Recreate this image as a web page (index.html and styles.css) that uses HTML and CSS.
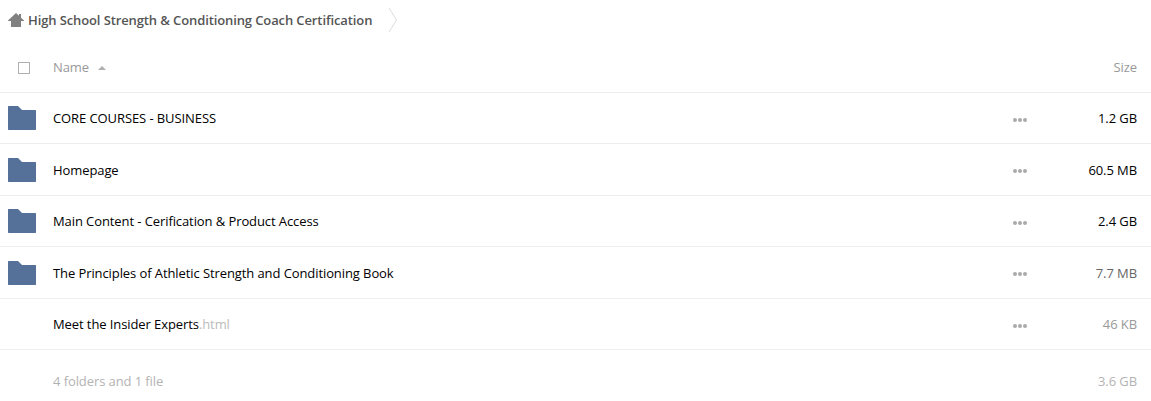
FILE: index.html
```html
<!DOCTYPE html>
<html lang="en">
<head>
<meta charset="utf-8">
<title>Files</title>
<link rel="stylesheet" href="styles.css">
</head>
<body>
<nav class="crumbs">
  <svg class="home" viewBox="0 0 16 14" width="16" height="14"><path d="M8 0L0 7.500V8h3v6h10V8h3v-.5L13 4.700V1h-2v1.800z"/></svg>
  <span class="crumb">High School Strength &amp; Conditioning Coach Certification</span>
  <svg class="chevron" viewBox="0 0 10 26" width="10" height="26"><path d="M1 1L8.500 13L1 25"/></svg>
</nav>
<main class="files">
  <div class="row head"><span class="icon"><span class="check"></span></span><span class="name">Name<i class="sort"></i></span><span class="size">Size</span></div>
  <div class="row"><span class="icon"><svg class="folder" viewBox="0 0 28 24" width="28" height="24"><path d="M.5 0H10l4 4h13.500l.5.500v19l-.5.500H.500l-.5-.5V.500z"/></svg></span><span class="name">CORE COURSES - BUSINESS</span><span class="dots"><i></i><i></i><i></i></span><span class="size">1.2 GB</span></div>
  <div class="row tall"><span class="icon"><svg class="folder" viewBox="0 0 28 24" width="28" height="24"><path d="M.5 0H10l4 4h13.500l.5.500v19l-.5.500H.500l-.5-.5V.500z"/></svg></span><span class="name">Homepage</span><span class="dots"><i></i><i></i><i></i></span><span class="size">60.5 MB</span></div>
  <div class="row"><span class="icon"><svg class="folder" viewBox="0 0 28 24" width="28" height="24"><path d="M.5 0H10l4 4h13.500l.5.500v19l-.5.500H.500l-.5-.5V.500z"/></svg></span><span class="name">Main Content - Cerification &amp; Product Access</span><span class="dots"><i></i><i></i><i></i></span><span class="size">2.4 GB</span></div>
  <div class="row tall"><span class="icon"><svg class="folder" viewBox="0 0 28 24" width="28" height="24"><path d="M.5 0H10l4 4h13.500l.5.500v19l-.5.500H.500l-.5-.5V.500z"/></svg></span><span class="name">The Principles of Athletic Strength and Conditioning Book</span><span class="dots"><i></i><i></i><i></i></span><span class="size mid">7.7 MB</span></div>
  <div class="row"><span class="icon"></span><span class="name">Meet the Insider Experts<span class="ext">.html</span></span><span class="dots"><i></i><i></i><i></i></span><span class="size small">46 KB</span></div>
  <div class="row summary"><span class="icon"></span><span class="name">4 folders and 1 file</span><span class="size">3.6 GB</span></div>
</main>
</body>
</html>
```
FILE: styles.css
```css
* { box-sizing: border-box; }
body { margin: 0; background: #fff; color: #000; font: 13px/18px "Open Sans", sans-serif; letter-spacing: -0.09px; overflow: hidden; }
.crumbs { display: flex; align-items: center; height: 41px; padding: 0 8px 1px; }
.home { fill: #808080; margin-right: 4px; }
.crumb { font-weight: 600; color: #555; letter-spacing: -0.11px; }
.chevron { margin-left: 16px; fill: none; stroke: #ddd; }
.row { display: flex; align-items: center; height: 51px; padding: 0 14px 0 8px; border-bottom: 1px solid #eee; }
.tall { height: 52px; padding-top: 1px; }
.head { height: 52px; padding-top: 1px; color: #999; }
.icon { width: 45px; display: flex; }
.folder { fill: #557199; }
.check { width: 12px; height: 12px; margin: 2px 0 0 10px; border: 1px solid #b0b0b0; }
.name { flex: 1; }
.sort { display: inline-block; margin-left: 9px; vertical-align: 2px; border: 4px solid transparent; border-top: 0; border-bottom-color: #b0b0b0; }
.dots { display: flex; gap: 1px; margin-top: 4px; }
.tall .dots { margin-top: 2px; }
.dots i { width: 4px; height: 4px; border-radius: 50%; background: #aaa; }
.size { width: 110px; text-align: right; }
.mid { color: #666; }
.small { color: #999; }
.ext { color: #bbb; }
.summary { height: 62px; color: #b3b3b3; border: 0; }
```
